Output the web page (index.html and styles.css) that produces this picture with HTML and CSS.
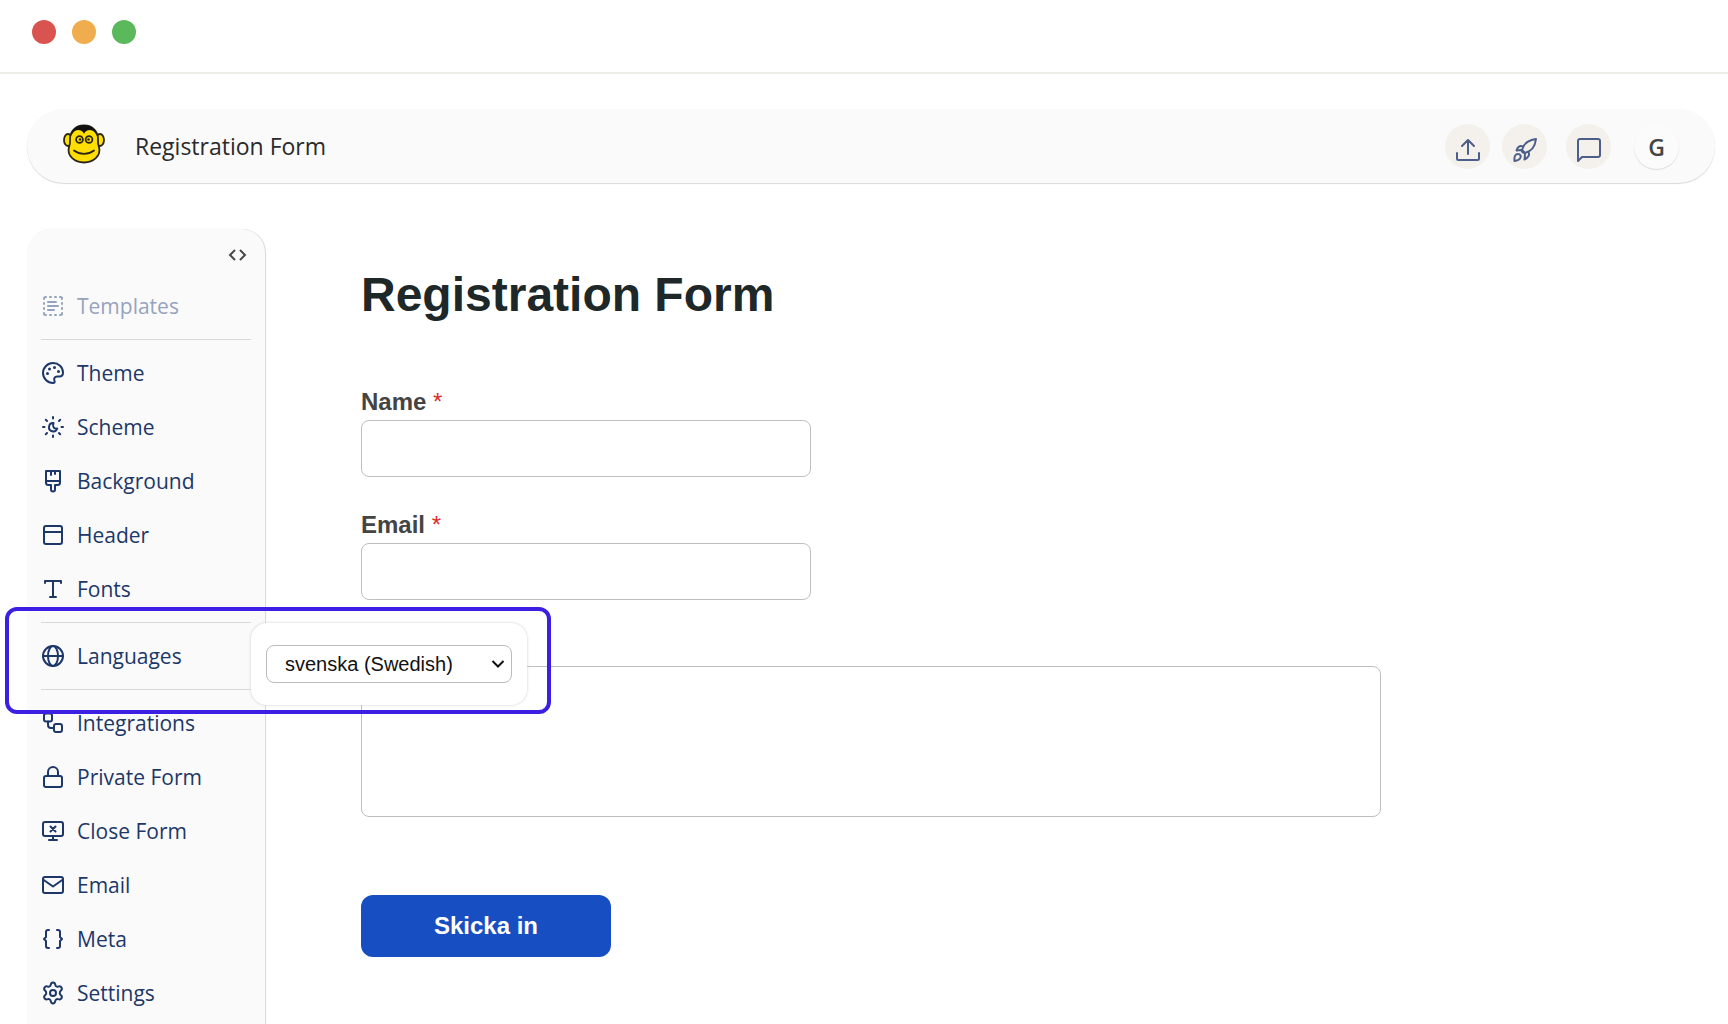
FILE: index.html
```html
<!DOCTYPE html>
<html lang="en">
<head>
<meta charset="utf-8">
<meta name="viewport" content="width=device-width, initial-scale=1">
<title>Registration Form</title>
<link rel="stylesheet" href="styles.css">
</head>
<body>
<div class="window">
  <div class="titlebar">
    <span class="dot dot-red"></span>
    <span class="dot dot-amber"></span>
    <span class="dot dot-green"></span>
  </div>

  <header class="topbar">
    <svg class="logo" viewBox="0 0 42 40" aria-hidden="true">
      <g fill="#ffde00" stroke="#2a2616" stroke-width="1.8">
        <ellipse cx="5" cy="16" rx="4" ry="6"/>
        <ellipse cx="37" cy="16" rx="4" ry="6"/>
        <path d="M21 1.500C12 1.500 7 8 7 15c0 3 .5 4-1 8-2.500 9 6 15.500 15 15.500S38.500 32 36 23c-1.500-4-1-5-1-8C35 8 30 1.500 21 1.500Z"/>
      </g>
      <path d="M8 12C9 5 14 1 21 1s12 4 13 11c-2-4-4-6-7-6-3 0-5 1.500-6 4-1-2.500-3-4-6-4-3 0-5 2-7 6Z" fill="#111"/>
      <g fill="#ffde00" stroke="#2a2616" stroke-width="1.800">
        <circle cx="16.500" cy="15.500" r="3.400"/>
        <circle cx="26" cy="15.500" r="3.400"/>
      </g>
      <g fill="#2a2616">
        <circle cx="17" cy="15.500" r="1.300"/>
        <circle cx="25.500" cy="15.500" r="1.300"/>
      </g>
      <path d="M11 26.500c6 4.500 14 4.500 20 0" fill="none" stroke="#2a2616" stroke-width="1.800" stroke-linecap="round"/>
    </svg>
    <span class="form-name">Registration Form</span>
    <div class="actions">
      <button class="round" type="button" aria-label="Share">
        <svg class="icon" viewBox="0 0 24 24"><path d="M12 16V2M6 8l6-6 6 6M1 15v5.500A1.500 1.500 0 0 0 2.500 22h19a1.500 1.500 0 0 0 1.500-1.500V15"/></svg>
      </button>
      <button class="round" type="button" aria-label="Publish">
        <svg class="icon" viewBox="0 0 24 24"><path d="M9 12C10.500 6 15 2 23 1c-1 8-5 12.500-11 14ZM9 12c-.5 1.500.5 3 3 3M10 8.500c-3-1.500-5.500.5-6.500 4L8 12M15.500 14c1.500 3-.5 6-4 7.500L12 16M1.500 23c-.5-5 1-7 3.500-7s3.500 2 2 4.500c-1 1.500-3 2-5.500 2.500Z"/></svg>
      </button>
      <button class="round round-chat" type="button" aria-label="Comments">
        <svg class="icon" viewBox="0 0 24 24"><path d="M1 23V3a2 2 0 0 1 2-2h18a2 2 0 0 1 2 2v14a2 2 0 0 1-2 2H5Z"/></svg>
      </button>
      <button class="round avatar" type="button" aria-label="Account G">G</button>
    </div>
  </header>

  <div class="workspace">
    <nav class="sidebar" aria-label="Form design">
      <button class="code-toggle" type="button" aria-label="Show code">
        <svg viewBox="0 0 20 16"><path d="M8 3 3 8l5 5M13 3l5 5-5 5"/></svg>
      </button>
      <a class="item item-muted" href="#templates">
        <svg class="icon" viewBox="0 0 24 24"><path d="M3 5V4.500A1.500 1.500 0 0 1 4.500 3H5M19 3h.5A1.500 1.500 0 0 1 21 4.500V5M21 19v.5a1.500 1.500 0 0 1-1.500 1.500H19M5 21h-.5A1.500 1.500 0 0 1 3 19.500V19M9 3h1M14 3h1M9 21h1M14 21h1M3 9v1M3 14v1M21 9v1M21 14v1M7 8h8M7 12h10M7 16h6"/></svg>
        Templates
      </a>
      <hr class="rule">
      <a class="item" href="#theme">
        <svg class="icon" viewBox="0 0 24 24"><path d="M12 2C6.500 2 2 6.500 2 12s4.500 10 10 10c1.500 0 2-1 1.500-2.200-1-2.300.2-4.300 2.700-4.300h2.300c2 0 3.500-1.500 3.500-4C22 6 17.500 2 12 2Z"/><g fill="currentColor" stroke="none"><circle cx="6.500" cy="12.500" r="1.500"/><circle cx="8.500" cy="8" r="1.500"/><circle cx="13.500" cy="6.500" r="1.500"/><circle cx="17.500" cy="10.500" r="1.500"/></g></svg>
        Theme
      </a>
      <a class="item" href="#scheme">
        <svg class="icon" viewBox="0 0 24 24"><path d="M12 2v1.500M12 20.500V22M2 12h1.500M20.500 12H22M4.800 4.800 6 6M18 18l1.200 1.200M4.800 19.200 6 18M18 6l1.200-1.200M12.500 8a4.200 4.200 0 1 0 3.700 5.500c-3 .8-5.200-2-3.700-5.500Z"/></svg>
        Scheme
      </a>
      <a class="item" href="#background">
        <svg class="icon" viewBox="0 0 24 24"><path d="M5 12V2h14v10M10 2v4M14 2v3M5 12h14v1.500a2.500 2.500 0 0 1-2.500 2.500H14v4.500a2 2 0 0 1-4 0V16H7.500A2.500 2.500 0 0 1 5 13.500Z"/></svg>
        Background
      </a>
      <a class="item" href="#header">
        <svg class="icon" viewBox="0 0 24 24"><rect x="3" y="3" width="18" height="18" rx="2"/><path d="M3 9h18"/></svg>
        Header
      </a>
      <a class="item" href="#fonts">
        <svg class="icon" viewBox="0 0 24 24"><path d="M4 6V4h16v2M12 4v16M9 20h6"/></svg>
        Fonts
      </a>
      <hr class="rule">
      <div class="language-group">
        <a class="item" href="#languages">
          <svg class="icon" viewBox="0 0 24 24"><circle cx="12" cy="12" r="10"/><ellipse cx="12" cy="12" rx="5" ry="10"/><path d="M2 12h20"/></svg>
          Languages
        </a>
        <div class="popover">
          <div class="select-wrap">
            <select class="language-select" aria-label="Language">
              <option>svenska (Swedish)</option>
            </select>
            <svg class="chevron" viewBox="0 0 14 10" aria-hidden="true"><path d="m1.500 2 5.500 5.500L12.500 2"/></svg>
          </div>
        </div>
        <div class="spotlight"></div>
      </div>
      <hr class="rule">
      <a class="item" href="#integrations">
        <svg class="icon" viewBox="0 0 24 24"><rect x="3" y="2.500" width="8" height="8" rx="2"/><rect x="13" y="13" width="8" height="8" rx="2"/><path d="M7 10.500V14a3 3 0 0 0 3 3h3"/></svg>
        Integrations
      </a>
      <a class="item" href="#private">
        <svg class="icon" viewBox="0 0 24 24"><rect x="3" y="11" width="18" height="11" rx="2"/><path d="M7 11V7a5 5 0 0 1 10 0v4"/></svg>
        Private Form
      </a>
      <a class="item" href="#close">
        <svg class="icon" viewBox="0 0 24 24"><rect x="2" y="3" width="20" height="14" rx="2"/><path d="M12 17v4M8 21h8M9.500 7.500l5 5M14.500 7.500l-5 5"/></svg>
        Close Form
      </a>
      <a class="item" href="#email">
        <svg class="icon" viewBox="0 0 24 24"><rect x="2" y="4" width="20" height="16" rx="2"/><path d="m2 6.500 10 7 10-7"/></svg>
        Email
      </a>
      <a class="item" href="#meta">
        <svg class="icon" viewBox="0 0 24 24"><path d="M8 3H7a2 2 0 0 0-2 2v5l-2 2 2 2v5a2 2 0 0 0 2 2h1M16 3h1a2 2 0 0 1 2 2v5l2 2-2 2v5a2 2 0 0 1-2 2h-1"/></svg>
        Meta
      </a>
      <a class="item" href="#settings">
        <svg class="icon" viewBox="0 0 24 24"><circle cx="12" cy="12" r="3"/><path d="M9.600 4.100C9.900 2.300 10.600 1.500 12 1.500s2.100.8 2.400 2.600c.2 1.200 1.500 2 2.700 1.500 1.700-.7 2.700-.4 3.400.9s.5 2.300-1 3.500c-1 .9-1 2.900 0 3.800 1.500 1.200 1.700 2.300 1 3.500s-1.700 1.600-3.400.9c-1.200-.5-2.500.3-2.700 1.500-.3 1.800-1 2.800-2.400 2.800s-2.100-1-2.400-2.800c-.2-1.200-1.500-2-2.700-1.500-1.700.7-2.700.4-3.400-.9s-.5-2.300 1-3.500c1-.9 1-2.900 0-3.800-1.500-1.200-1.700-2.300-1-3.500s1.700-1.600 3.400-.9c1.200.5 2.500-.3 2.700-1.500Z"/></svg>
        Settings
      </a>
    </nav>

    <main class="canvas">
      <h1 class="heading">Registration Form</h1>
      <form class="form">
        <div class="field">
          <label class="label" for="name">Name <span class="required">*</span></label>
          <input class="input" id="name" type="text">
        </div>
        <div class="field">
          <label class="label" for="email">Email <span class="required">*</span></label>
          <input class="input" id="email" type="email">
        </div>
        <div class="field field-untitled">
          <textarea class="input input-area" aria-label="Message"></textarea>
        </div>
        <button class="submit" type="submit">Skicka in</button>
      </form>
    </main>
  </div>
</div>
</body>
</html>
```
FILE: styles.css
```css
* {
  box-sizing: border-box;
}

body {
  margin: 0;
  background: #fff;
  font-family: "Open Sans", "Noto Sans", sans-serif;
}

button,
input,
select,
textarea {
  margin: 0;
  font: inherit;
}

.window {
  display: flex;
  flex-direction: column;
  min-height: 100vh;
}

/* Window chrome */
.titlebar {
  display: flex;
  gap: 16px;
  padding: 20px 32px 28px;
  border-bottom: 2px solid #edece7;
}

.dot {
  width: 24px;
  height: 24px;
  border-radius: 50%;
}

.dot-red { background: #d9534f; }
.dot-amber { background: #f0ad4e; }
.dot-green { background: #5cb85c; }

/* Top bar */
.topbar {
  display: flex;
  align-items: center;
  height: 74px;
  margin: 35px 13px 0 27px;
  padding: 0 36px;
  border-radius: 37px;
  background: #fafafa;
  box-shadow: 0 1px 1px #d8d8d8;
}

.logo {
  width: 42px;
  height: 40px;
  margin-bottom: 4px;
}

.form-name {
  flex: 1;
  margin-left: 30px;
  color: #2a2a2a;
  font-size: 23px;
  line-height: 32px;
}

.actions {
  display: flex;
  gap: 12px;
}

.round {
  display: flex;
  align-items: center;
  justify-content: center;
  width: 45px;
  height: 45px;
  padding: 8px 0 0;
  border: 0;
  border-radius: 50%;
  background: #f4f1ed;
  color: #4d5f88;
}

.round-chat {
  margin-left: 7px;
}

.avatar {
  margin-left: 11px;
  padding: 2px 0 0;
  background: #fbfbfb;
  box-shadow: 0 1px 1px #dcdcdc;
  color: #444;
  font-size: 23px;
  font-weight: 600;
}

.icon {
  flex: none;
  width: 24px;
  height: 24px;
  fill: none;
  stroke: currentColor;
  stroke-width: 2;
  stroke-linecap: round;
  stroke-linejoin: round;
}

/* Sidebar */
.workspace {
  display: flex;
  flex: 1;
  gap: 96px;
  margin: 46px 0 0 27px;
}

.sidebar {
  flex: none;
  width: 238px;
  padding: 12px 14px 0;
  border-radius: 24px 24px 0 0;
  background: #fafafa;
  box-shadow: 1px 0 1px #d8d8d8;
}

.code-toggle {
  display: block;
  width: 28px;
  height: 28px;
  margin: 0 0 10px auto;
  padding: 6px 4px;
  border: 0;
  background: none;
}

.code-toggle svg {
  display: block;
  width: 20px;
  height: 16px;
  fill: none;
  stroke: #4a4a4a;
  stroke-width: 2;
}

.item {
  display: flex;
  align-items: center;
  gap: 12px;
  height: 54px;
  color: #1d3768;
  font-size: 21px;
  text-decoration: none;
}

.item-muted {
  color: #96a3be;
}

.rule {
  height: 1px;
  margin: 6px 0;
  border: 0;
  background: #d9d9d9;
}

/* Language picker, floats over the form */
.language-group {
  position: relative;
}

.popover {
  position: absolute;
  z-index: 1;
  top: -6px;
  left: 210px;
  padding: 22px 15px;
  border-radius: 16px;
  background: #fff;
  box-shadow: 0 0 3px #ccc;
}

.select-wrap {
  position: relative;
}

.language-select {
  display: block;
  width: 246px;
  height: 38px;
  padding: 0 40px 0 18px;
  border: 1px solid #bcbcbc;
  border-radius: 8px;
  background: #fff;
  color: #111;
  font-family: "Liberation Sans", Arial, sans-serif;
  font-size: 20px;
  appearance: none;
}

.chevron {
  position: absolute;
  top: 14px;
  right: 7px;
  width: 14px;
  height: 10px;
  fill: none;
  stroke: #111;
  stroke-width: 2;
  pointer-events: none;
}

.spotlight {
  position: absolute;
  z-index: 2;
  top: -22px;
  left: -36px;
  width: 546px;
  height: 107px;
  border: 4px solid #3b1fe3;
  border-radius: 12px;
  pointer-events: none;
}

/* Form */
.canvas {
  flex: 1;
  max-width: 1116px;
  padding: 38px 96px 60px 0;
  font-family: "Liberation Sans", Arial, sans-serif;
}

.heading {
  margin: 0 0 65px;
  color: #1e2828;
  font-size: 48px;
  line-height: 56px;
}

.form {
  display: flex;
  flex-direction: column;
  align-items: flex-start;
  gap: 34px;
}

.field {
  display: flex;
  flex-direction: column;
  gap: 4px;
  width: 100%;
}

.field-untitled {
  padding-top: 32px;
}

.label {
  color: #444;
  font-size: 24px;
  font-weight: 700;
  line-height: 28px;
}

.required {
  color: #dc2c2c;
  font-weight: 400;
}

.input {
  width: 100%;
  max-width: 450px;
  height: 57px;
  padding: 0 16px;
  border: 1px solid #bfbfbf;
  border-radius: 8px;
  background: #fff;
  font-size: 24px;
}

.input-area {
  max-width: none;
  height: 151px;
  padding: 12px 16px;
  resize: none;
}

.submit {
  width: 250px;
  height: 62px;
  margin-top: 44px;
  border: 0;
  border-radius: 12px;
  background: #174fc2;
  color: #fff;
  font-size: 24px;
  font-weight: 700;
}
```
